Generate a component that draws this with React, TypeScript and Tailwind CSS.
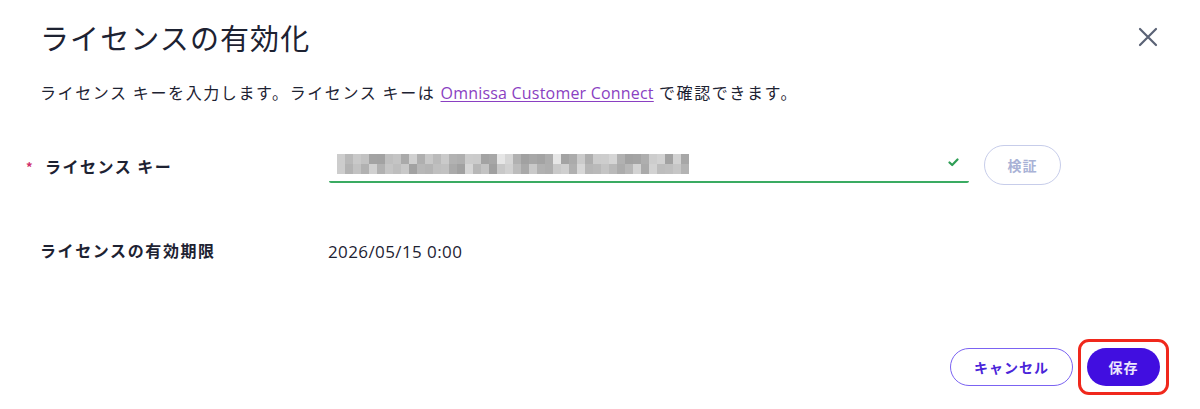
import React from "react";

const JP = '"Noto Sans CJK JP", "Noto Sans", sans-serif';
const LAT = '"Open Sans", "Noto Sans CJK JP", sans-serif';

function BlurKey() {
  const cols = 44;
  const cells: { c: string }[][] = [];
  let s = 98765;
  const rnd = () => {
    s = (s * 1103515245 + 12345) & 0x7fffffff;
    return s / 0x7fffffff;
  };
  for (let r = 0; r < 2; r++) {
    const row: { c: string }[] = [];
    for (let i = 0; i < cols; i++) {
      const gap = (i === 20 || i === 27) && r === 0;
      const v = gap ? 230 : Math.round(160 + rnd() * 55);
      row.push({ c: `rgb(${v},${v},${v})` });
    }
    cells.push(row);
  }
  return (
    <div className="flex flex-col">
      {cells.map((row, r) => (
        <div key={r} className="flex">
          {row.map((cell, i) => (
            <div key={i} className="w-[8px] h-[10px]" style={{ backgroundColor: cell.c }} />
          ))}
        </div>
      ))}
    </div>
  );
}

export default function App() {
  return (
    <div className="w-[1200px] h-[409px] bg-white relative overflow-hidden text-[#1d2232]" style={{ fontFamily: JP }}>
      {/* header */}
      <div className="flex items-center justify-between pl-[40px] pr-[40px] pt-[16px] h-[58px]">
        <h1 className="text-[29px] font-normal tracking-[1.1px] leading-none text-[#1d2232]">ライセンスの有効化</h1>
        <button className="w-[24px] h-[24px] flex items-center justify-center text-[#5a6275]">
          <svg width="22" height="22" viewBox="0 0 22 22" fill="none" stroke="currentColor" strokeWidth="2.2" strokeLinecap="round">
            <path d="M3 3 L19 19 M19 3 L3 19" />
          </svg>
        </button>
      </div>

      {/* description */}
      <p className="pl-[40px] mt-[23px] text-[16px] leading-[22px] tracking-[1.6px] text-[#1d2232]">
        ライセンス キーを入力します。ライセンス キーは{" "}
        <a className="text-[#8a3fc2] underline underline-offset-2 tracking-[0.2px] text-[16px]" style={{ fontFamily: LAT }}>
          Omnissa Customer Connect
        </a>{" "}
        で確認できます。
      </p>

      {/* license key row */}
      <div className="flex items-start mt-[42px]">
        <div className="w-[329px] pl-[26px] pt-[12px] flex items-center">
          <span className="text-[#d0306b] text-[13px] leading-none w-[19px] font-bold">*</span>
          <span className="text-[16px] font-bold tracking-[1.5px] leading-none">ライセンス キー</span>
        </div>
        <div className="w-[640px] h-[37px] relative flex items-center pl-[8px] pb-[2px]">
          <BlurKey />
          <svg className="absolute right-[10px] top-[12px]" width="11" height="9" viewBox="0 0 11 9" fill="none" stroke="#2e9e55" strokeWidth="2.2" strokeLinecap="round" strokeLinejoin="round">
            <path d="M1.5 4.5 L4.2 7 L9.5 1.5" />
          </svg>
          <div className="absolute left-0 right-0 bottom-0 h-[2px] bg-[#3aab62] rounded-b-[2px]" />
        </div>
        <button
          className="ml-[15px] -mt-[1px] w-[77px] h-[40px] rounded-full border-[1.5px] border-[#c7cdea] text-[#a9b2d6] text-[14px] font-bold tracking-[1px] flex items-center justify-center"
        >
          検証
        </button>
      </div>

      {/* expiry row */}
      <div className="flex items-center mt-[51px]">
        <div className="w-[328px] pl-[40px] text-[16px] font-bold tracking-[1.6px]">ライセンスの有効期限</div>
        <div className="text-[17px] tracking-[0.4px] text-[#1d2232] pt-[3px]" style={{ fontFamily: LAT }}>2026/05/15 0:00</div>
      </div>

      {/* footer */}
      <div className="absolute right-[31px] bottom-[14px] flex items-center gap-[5px]">
        <button className="w-[123px] h-[38px] rounded-full border-[1.5px] border-[#7b63f2] text-[#4a25d9] text-[14px] font-bold tracking-[1px] flex items-center justify-center bg-white">
          キャンセル
        </button>
        <div className="p-[6px] border-[3px] border-[#f0281c] rounded-[11px]">
          <button className="w-[73px] h-[38px] rounded-full bg-[#410ee0] text-white/90 text-[14px] font-bold tracking-[1px] flex items-center justify-center">
            保存
          </button>
        </div>
      </div>
    </div>
  );
}
